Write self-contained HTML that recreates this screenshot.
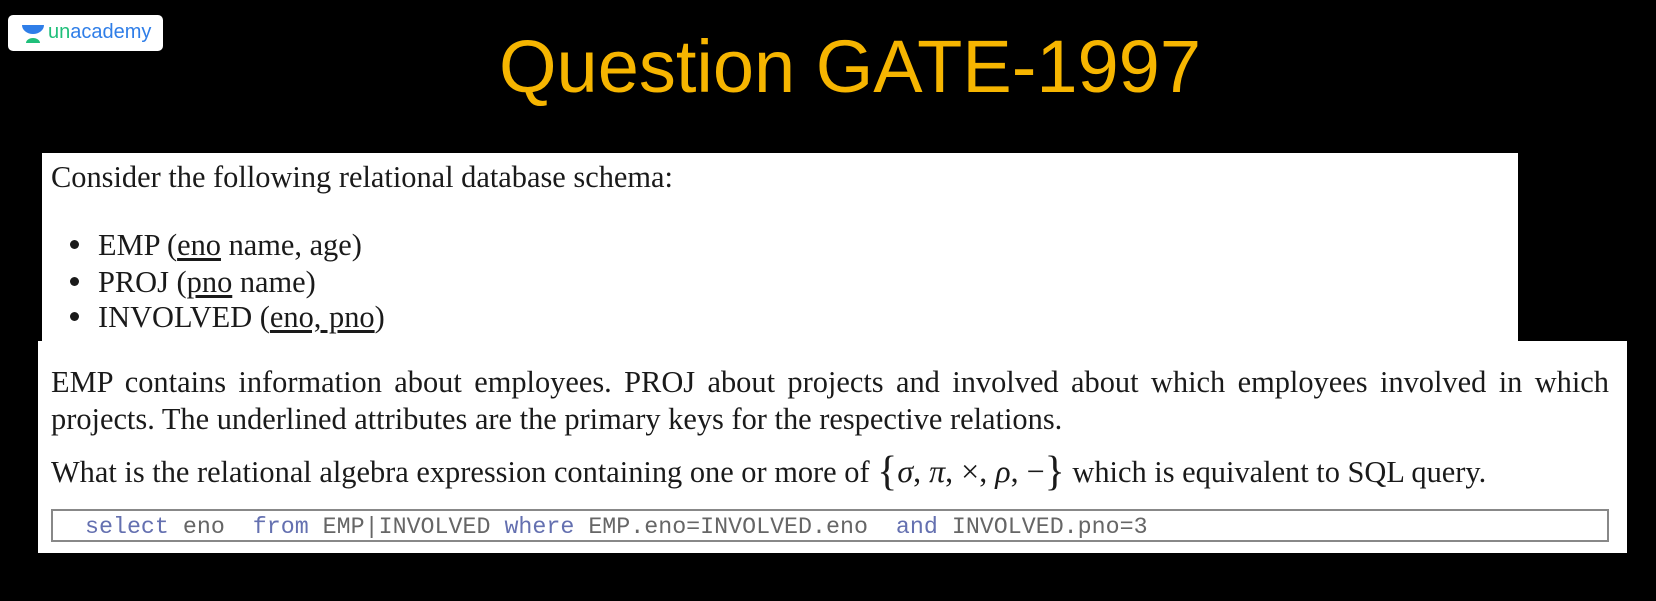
<!DOCTYPE html>
<html><head><meta charset="utf-8"><style>
*{margin:0;padding:0;box-sizing:border-box}
body{width:1656px;height:601px;background:#000;position:relative;overflow:hidden;font-family:"Liberation Serif",serif;color:#1a1a1a}
.logo{position:absolute;left:8px;top:15px;width:155px;height:36px;background:#fff;border-radius:5px}
.logo span{position:absolute;left:40px;top:6px;font:20px "Liberation Sans",sans-serif;color:#2f7ee8}
.logo b{font-weight:normal;color:#1fbf7a}
.title{position:absolute;width:1656px;text-align:center;left:22px;top:24px;font:74px "Liberation Sans",sans-serif;color:#f6b500}
.p1{position:absolute;left:42px;top:153px;width:1476px;height:190px;background:#fff}
.p2{position:absolute;left:38px;top:341px;width:1589px;height:212px;background:#fff}
.t{position:absolute;font-size:30.4px;white-space:nowrap;line-height:1}
u{text-decoration:underline;text-underline-offset:3px}
.dot{position:absolute;width:9px;height:9px;border-radius:50%;background:#1a1a1a;left:70px}
.code{position:absolute;left:51px;top:509px;width:1558px;height:33px;border:2px solid #888;background:#fff}
.code div{position:absolute;left:32px;top:3px;font:23.3px "Liberation Mono",monospace;color:#666;white-space:pre}
.k{color:#6470b0}
.j{position:absolute;left:51px;width:1558px;font-size:30.4px;text-align:justify;text-align-last:justify;line-height:1}
.m{font-size:32px}
</style></head><body>
<div class="logo">
<svg style="position:absolute;left:12px;top:9px" width="26" height="20" viewBox="0 0 26 20"><path d="M2 1h22a11 9 0 0 1-22 0z" fill="#2f7ee8"/><path d="M6 19a7 5 0 0 1 14 0z" fill="#1fbf7a"/></svg>
<span><b>un</b>academy</span></div>
<div class="title">Question GATE-1997</div>
<div class="p1"></div>
<div class="p2"></div>
<div class="t" style="left:51px;top:162px">Consider the following relational database schema:</div>
<div class="dot" style="top:240px"></div>
<div class="t" style="left:98px;top:230px">EMP (<u>eno</u> name, age)</div>
<div class="dot" style="top:277px"></div>
<div class="t" style="left:98px;top:267px">PROJ (<u>pno</u> name)</div>
<div class="dot" style="top:312px"></div>
<div class="t" style="left:98px;top:302px">INVOLVED (<u>eno, pno</u>)</div>
<div class="j" style="top:367px">EMP contains information about employees. PROJ about projects and involved about which employees involved in which</div>
<div class="t" style="left:51px;top:404px">projects. The underlined attributes are the primary keys for the respective relations.</div>
<div class="t" style="left:51px;top:451px">What is the relational algebra expression containing one or more of <span class="m"><span style="font-size:42px;vertical-align:-3px">{</span><i>σ</i>, <i>π</i>, ×, <i>ρ</i>, −<span style="font-size:42px;vertical-align:-3px">}</span></span> which is equivalent to SQL query.</div>
<div class="code"><div><span class="k">select</span> eno  <span class="k">from</span> EMP|INVOLVED <span class="k">where</span> EMP.eno=INVOLVED.eno  <span class="k">and</span> INVOLVED.pno=3</div></div>
</body></html>
